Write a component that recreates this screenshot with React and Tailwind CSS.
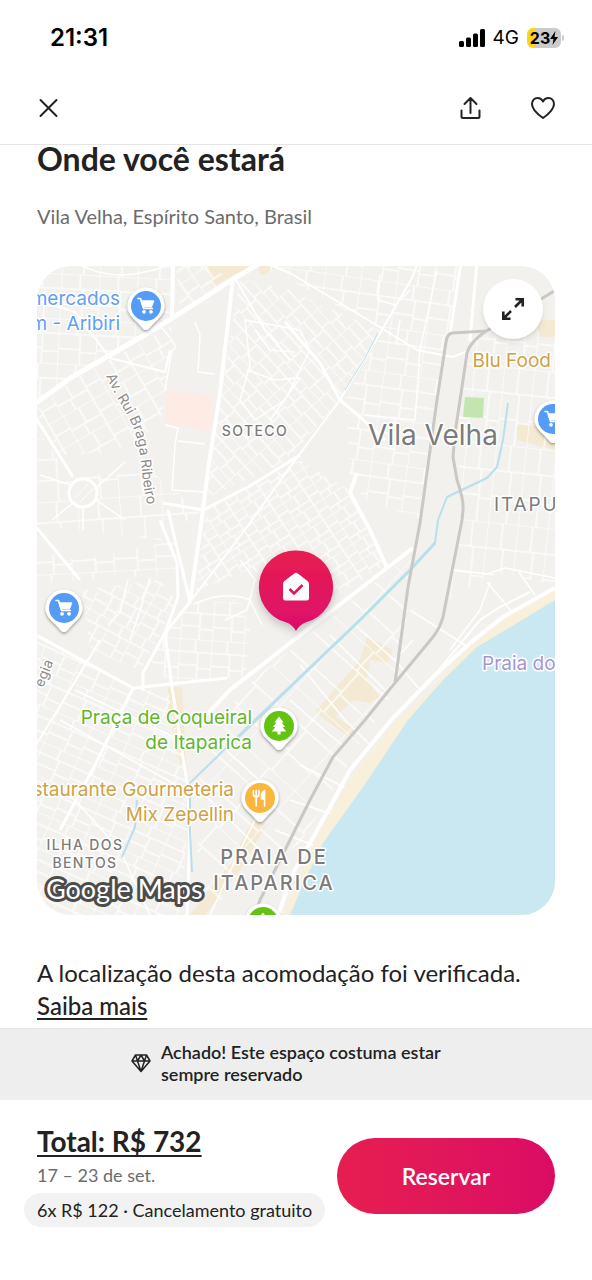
import React from "react";

const CART = (
  <g fill="none" stroke="#fff" strokeWidth="1.6" strokeLinecap="round" strokeLinejoin="round">
    <path d="M-8 -7.5h2.6l3 10h8.8" />
    <path d="M-4.8 -5h12.3l-2.2 5.6h-8.3z" fill="#fff" />
    <circle cx="-2" cy="5.8" r="1.1" fill="#fff" />
    <circle cx="5" cy="5.8" r="1.1" fill="#fff" />
  </g>
);

const TREE = (
  <path
    d="M0-9.5 4.6-3.6H2.6L6 1H3.6L7.2 5.4H1.6V8.6H-1.6V5.4H-7.2L-3.6 1H-6L-2.6-3.6H-4.6Z"
    fill="#fff"
  />
);

const FORK = (
  <g fill="none" stroke="#fff" strokeLinecap="round" strokeWidth="1.6">
    <path d="M-6.6-7.4v3.6q0 2.6 2.8 2.6t2.8-2.6v-3.6M-3.8-7.4V8" />
    <path d="M4.6 8V-7.2Q1.6-6 1.6-1.6V1h3" fill="#fff" />
  </g>
);

function Pin({ x, y, color, children }) {
  return (
    <g transform={`translate(${x} ${y})`}>
      <path
        d="M0-18.5A18.5 18.5 0 0 1 18.5 0C18.5 7 13.5 12 9 16L3 22.5Q0 25.5-3 22.5L-9 16C-13.5 12-18.5 7-18.5 0A18.5 18.5 0 0 1 0-18.5Z"
        fill="#fff"
        filter="url(#pinShadow)"
      />
      <circle r="15" fill={color} />
      {children}
    </g>
  );
}

const GRIDS = [
  { id: "g1", w: 19, h: 15, a: 3, pts: "36,266 172,266 172,318 72,376 36,400" },
  { id: "g2", w: 14, h: 17, a: 60, pts: "76,378 172,326 168,385 160,425 112,452 60,455 40,418 36,410" },
  { id: "g3", w: 12, h: 15, a: 55, pts: "176,266 208,266 232,280 180,310" },
  { id: "g4", w: 17, h: 10, a: 48, pts: "240,278 290,290 383,332 340,400 285,462 206,498 222,390" },
  { id: "g5", w: 18, h: 15, a: 8, pts: "262,266 462,266 446,340 430,450 422,520 366,500 350,480 345,400 383,330" },
  { id: "g6", w: 9, h: 12, a: 57, pts: "206,510 300,460 350,490 385,565 330,600 250,570 196,590" },
  { id: "g7", w: 15, h: 26, a: 6, pts: "466,340 555,330 555,586 500,572 448,600 462,500 455,440" },
  { id: "g8", w: 21, h: 12, a: -3, pts: "36,552 80,560 178,540 176,575 110,578 36,584" },
  { id: "g9", w: 16, h: 13, a: 4, pts: "150,660 168,628 188,604 240,600 250,630 246,676 170,684" },
  { id: "g10", w: 19, h: 11, a: 24, pts: "36,635 132,688 168,690 190,800 180,915 36,915" },
  { id: "g11", w: 34, h: 26, a: 42, pts: "414,552 400,680 300,843 200,915 195,790 240,690 388,572" },
  { id: "g12", w: 21, h: 21, a: -4, pts: "36,425 70,478 150,470 200,512 160,540 36,525" },
  { id: "g13", w: 13, h: 11, a: 28, pts: "82,590 160,580 176,600 160,635 140,670 90,650" },
];

const MAJOR = [
  ["M36 403 72 377 160 326 235 278 262 262", 5],
  ["M233 278 220 393 208 470 201 525 190 602", 4],
  ["M173 262 172 320", 4],
  ["M36 418 73 477M36 527 80 580", 3],
  ["M160 520 177 563 178 597 165 633 143 673V690", 3],
  ["M168 510 190 602 165 633 172 687 187 783 190 827 187 915", 3],
  ["M190 602 247 527 290 467 340 400 383 328 412 278 418 262", 2],
  ["M262 262 290 273 340 303 383 329 417 350 453 357 470 350", 2],
  ["M285 322 320 363 340 400 360 417 385 440", 3],
  ["M461 262 450 334M477 262 470 340", 3],
  ["M357 473 350 493 370 530 387 568", 4],
  ["M413 548 387 568 290 643 230 690 200 722", 4],
  ["M163 503 203 510 250 486 300 455", 3],
  ["M36 635 133 688 227 678", 3],
  ["M133 688 95 765 60 830", 3],
  ["M36 745 70 690 100 640", 2],
  ["M235 278 265 330 290 360", 2],
  ["M36 300 75 312 110 358 165 372 170 350", 2],
];

const MINOR = [
  "M75 262Q105 280 140 273T160 262",
  "M160 326Q182 350 172 350L165 390",
  "M245 320 300 330 310 350 285 400 255 420 240 400 250 365Z",
  "M255 330 270 350 295 352M247 370 275 380 300 378 270 420",
  "M195 322 200 335 198 372 215 374M165 425 178 428 175 445 172 490 205 492M178 441 205 444",
  "M128 580 120 612 108 625M150 578 140 610 130 640",
  "M380 275 378 300 395 305 410 290M400 320 396 345",
  "M437 270 420 350 415 420 365 415",
  "M454 570 487 574 505 568 555 578M487 582 512 612M490 582 480 610 450 650M519 572 535 595",
  "M240 560 255 580 247 610 225 620",
  "M194 604Q225 590 250 600L262 625",
  "M290 700 330 735 342 745M300 665 345 720 370 745",
  "M330 635 385 690M355 625 400 665M410 610 465 645",
  "M413 640 395 660 420 690M300 765 350 790M290 800 335 815M275 830 320 848",
  "M36 780 75 800 120 850 150 915M60 720 185 790M75 690 180 740",
  "M215 740 270 790 240 850 210 915M200 790 260 850",
  "M71 485 40 475M97 487 125 462M96 500 125 520M83 508V530M73 503 52 520",
];

function CityMap() {
  return (
    <svg
      viewBox="37 266 518 649"
      className="block w-full rounded-[34px]"
      role="img"
      aria-label="Mapa de Vila Velha"
    >
      <defs>
        {GRIDS.map((g) => (
          <pattern
            key={g.id}
            id={g.id}
            width={g.w * 2}
            height={g.h * 3}
            patternUnits="userSpaceOnUse"
            patternTransform={`rotate(${g.a})`}
          >
            <path
              d={`M0 0V${g.h * 3}M${g.w} 0V${g.h}M${g.w + 3} ${g.h}V${g.h * 3}M0 0H${g.w * 2}M0 ${g.h}H${g.w * 2}M0 ${g.h * 2}H${g.w + 3}M${g.w + 3} ${g.h * 2 + 3}H${g.w * 2}`}
              fill="none"
              stroke="#fdfdfc"
              strokeWidth="1.5"
            />
          </pattern>
        ))}
        <filter id="pinShadow" x="-40%" y="-30%" width="180%" height="180%">
          <feDropShadow dx="0" dy="1.5" stdDeviation="1.5" floodColor="#000" floodOpacity="0.4" />
        </filter>
        <filter id="homeShadow" x="-40%" y="-30%" width="180%" height="180%">
          <feDropShadow dx="0" dy="4" stdDeviation="5" floodColor="#000" floodOpacity="0.2" />
        </filter>
        <linearGradient id="homeFill" x1="0" y1="0" x2="0" y2="1">
          <stop offset="0" stopColor="#e81d50" />
          <stop offset="1" stopColor="#dc0f6c" />
        </linearGradient>
        <path id="avenue" d="M106 376C118 404 134 418 139 448S140 476 151 520" />
        <path id="egia" d="M43 688 60 645" />
      </defs>

      <rect x="36" y="266" width="520" height="649" fill="#f2f1ee" />

      <g fill="#f4ead3">
        <path d="M208 266H252L212 287ZM257 266H277L262 276Z" />
        <path d="M535 320H555V337H540ZM517 423 555 430V450L540 446 517 440Z" />
        <path d="M367 637 393 650 387 663 370 660 367 680 380 697 370 703 353 700 335 717 355 728 350 738 315 712 340 683 360 660Z" />
        <path d="M168 687H182L187 780 176 752 168 707Z" />
        <path d="M252 820 267 824 240 870 205 915H190L232 860Z" />
      </g>

      {GRIDS.map((g) => (
        <polygon key={g.id} points={g.pts} fill={`url(#${g.id})`} />
      ))}

      <path d="M167 390 213 397 210 432 165 423Z" fill="#fdebe4" />
      <path d="M465 397 484 398 483 418 463 417Z" fill="#c3e6b0" />

      <g fill="none" stroke="#fff" strokeLinejoin="round">
        {MINOR.map((d) => (
          <path key={d} d={d} strokeWidth="1.5" />
        ))}
        {MAJOR.map(([d, w]) => (
          <path key={d} d={d} strokeWidth={w} />
        ))}
        <circle cx="83" cy="493" r="14" strokeWidth="3" fill="#f2f1ee" />
        <path d="M75 498 88 484M80 502 93 489" strokeWidth="1" />
      </g>

      <g fill="none" stroke="#b9dfec" strokeWidth="3" strokeLinejoin="round">
        <path d="M378 333 365 358 345 390" strokeWidth="1" />
        <path d="M508 403 503 440 497 467 487 478 447 497 438 520 435 543 410 570 360 620 290 687 260 715 190 783" strokeWidth="2" />
        <path d="M435 543 410 570 360 620 290 687 230 745" />
        <path d="M190 783V833L192 872M137 800 135 827 122 857" strokeWidth="2" />
      </g>

      <path d="M555 590 503 620 463 653 430 690 397 720 347 783 317 837 297 880 283 915H555Z" fill="#f8f0da" />
      <path d="M555 600 517 623 477 647 443 680 408 720 363 787 323 843 305 880 290 915H555Z" fill="#c9e8f2" />
      <path
        d="M555 588 503 617 470 643 433 677 393 718 350 770 330 807 310 843 293 873 278 915"
        fill="none"
        stroke="#fff"
        strokeWidth="4"
      />
      <path d="M433 677 480 620 500 607 530 592" fill="none" stroke="#fff" strokeWidth="2" />

      <g fill="none" stroke="#c9c8c5" strokeWidth="3" strokeLinejoin="round">
        <path d="M556 290 510 318 486 331 452 333Q447 334 446 342L437 400 420 523 408 587 395 683" />
        <path d="M486 331Q470 342 467 353L462 387 455 433 453 457 457 480Q464 500 463 510L462 520 443 617Q440 628 433 637L394 684 365 720 333 757 310 800 290 840 260 900 255 915" />
      </g>

      <g
        fontFamily="Inter, 'Liberation Sans', sans-serif"
        stroke="#fff"
        strokeWidth="3"
        strokeLinejoin="round"
        paintOrder="stroke"
      >
        <g fontSize="19" fill="#62a0f2" textAnchor="end">
          <text x="120" y="305">mercados</text>
          <text x="120" y="330">m - Aribiri</text>
        </g>
        <g fontSize="19" fill="#62b62a" textAnchor="end">
          <text x="252" y="724">Praça de Coqueiral</text>
          <text x="252" y="749">de Itaparica</text>
        </g>
        <g fontSize="19" fill="#d0a144" textAnchor="end">
          <text x="234" y="796">staurante Gourmeteria</text>
          <text x="234" y="821">Mix Zepellin</text>
          <text x="551" y="367">Blu Food</text>
        </g>
        <text x="482" y="670" fontSize="19" fill="#a596d2">Praia do</text>
        <g fill="#7c7b79" textAnchor="middle">
          <text x="433" y="445" fontSize="28">Vila Velha</text>
          <text x="255" y="436" fontSize="14" fontWeight="500" className="tracking-widest">SOTECO</text>
          <text x="85" y="850" fontSize="14" fontWeight="500" className="tracking-widest">ILHA DOS</text>
          <text x="85" y="868" fontSize="14" fontWeight="500" className="tracking-widest">BENTOS</text>
          <text x="274" y="864" fontSize="20" fontWeight="500" className="tracking-widest">PRAIA DE</text>
          <text x="274" y="890" fontSize="20" fontWeight="500" className="tracking-widest">ITAPARICA</text>
        </g>
        <text x="494" y="511" fontSize="19" fill="#7c7b79" className="tracking-widest">ITAPUÃ</text>
        <g fontSize="14" fill="#8d8c8a">
          <text><textPath href="#avenue">Av. Rui Braga Ribeiro</textPath></text>
          <text><textPath href="#egia">egia</textPath></text>
        </g>
      </g>

      <Pin x={146} y={306} color="#549cf5">{CART}</Pin>
      <Pin x={64} y={608} color="#549cf5">{CART}</Pin>
      <Pin x={553} y={419} color="#549cf5">{CART}</Pin>
      <Pin x={279} y={726} color="#62c310">{TREE}</Pin>
      <Pin x={263} y={922} color="#62c310">{TREE}</Pin>
      <Pin x={260} y={798} color="#fbb63e">{FORK}</Pin>

      <path
        d="M296 550.5A36.5 36.5 0 0 1 307 622Q300 624 296 631Q292 624 285 622A36.5 36.5 0 0 1 296 550.5Z"
        fill="url(#homeFill)"
        filter="url(#homeShadow)"
      />
      <path
        d="M294.2 573.5Q296 572 297.8 573.5L307.5 581Q309 582.2 309 584V598Q309 600.5 306.5 600.5H285.5Q283 600.5 283 598V584Q283 582.2 284.5 581Z"
        fill="#fff"
      />
      <path d="M289.5 589 294 593.5 302.5 585" fill="none" stroke="#e0145f" strokeWidth="2.6" />

      <text
        x="46"
        y="899"
        fontSize="27"
        fontFamily="Lato, sans-serif"
        fill="#fff"
        stroke="#4c4c4c"
        strokeWidth="6"
        strokeLinejoin="round"
        paintOrder="stroke"
      >
        Google Maps
      </text>
    </svg>
  );
}

function StatusBar() {
  return (
    <div className="flex h-19 items-center justify-between pr-7 pl-[50px] font-[Inter,sans-serif] text-black">
      <span className="text-[24px] leading-7 font-semibold">21:31</span>
      <div className="flex items-center gap-2">
        <svg viewBox="0 0 26 18" className="h-[18px] w-[26px]" aria-hidden="true">
          <rect x="0" y="12" width="5" height="6" rx="1.5" />
          <rect x="7" y="8.5" width="5" height="9.5" rx="1.5" />
          <rect x="14" y="4.5" width="5" height="13.5" rx="1.5" />
          <rect x="21" y="0" width="5" height="18" rx="1.5" />
        </svg>
        <span className="text-[19px] leading-6">4G</span>
        <div className="flex items-center gap-px">
          <div className="flex h-5 w-[34px] items-center justify-center rounded-md bg-linear-to-r from-[#fbd31d] from-25% to-[#cbcbcb] to-25% text-[16px] leading-5 font-bold">
            23
            <svg viewBox="0 0 8 14" className="h-[14px] w-2" aria-hidden="true">
              <path d="M5.5 0 0 8H3.5L2.5 14 8 6H4.5Z" />
            </svg>
          </div>
          <div className="h-1.5 w-0.5 rounded-r-full bg-[#cbcbcb]" />
        </div>
      </div>
    </div>
  );
}

export default function App() {
  return (
    <div className="bg-white font-[Lato,sans-serif] text-[#222222]">
      <header className="border-b border-[#e6e6e6]">
        <StatusBar />
        <div className="flex h-[68px] items-start justify-between px-[37px] pt-5">
          <button type="button" aria-label="Fechar" className="size-6">
            <svg viewBox="0 0 24 24" className="size-6" fill="none" stroke="currentColor" strokeWidth="2" strokeLinecap="round">
              <path d="M3.5 4 19.5 20M19.5 4 3.5 20" />
            </svg>
          </button>
          <div className="flex gap-12">
            <button type="button" aria-label="Compartilhar" className="size-6">
              <svg viewBox="0 0 24 24" className="size-6" fill="none" stroke="currentColor" strokeWidth="2" strokeLinecap="round" strokeLinejoin="round">
                <path d="M11.5 17V2M5.5 8 11.5 2 17.5 8M2.5 14.5V20.5Q2.5 22 4 22H19Q20.5 22 20.5 20.5V14.5" />
              </svg>
            </button>
            <button type="button" aria-label="Salvar nos favoritos" className="size-6">
              <svg viewBox="0 0 24 24" className="size-6" fill="none" stroke="currentColor" strokeWidth="2" strokeLinejoin="round">
                <path d="M12 22C7 18.5 1 13.5 1 8C1 4.5 3.5 2 6.5 2C9 2 11 3.5 12 5.5C13 3.5 15 2 17.5 2C20.5 2 23 4.5 23 8C23 13.5 17 18.5 12 22Z" />
              </svg>
            </button>
          </div>
        </div>
      </header>

      <main className="px-[37px] pb-1.5">
        <h1 className="text-[32px] leading-7 font-bold">Onde você estará</h1>
        <p className="mt-[29px] text-[20px] leading-7 text-[#6c6c6c]">Vila Velha, Espírito Santo, Brasil</p>
        <div className="relative mt-9">
          <CityMap />
          <button
            type="button"
            aria-label="Expandir mapa"
            className="absolute top-[13px] right-3 flex size-[60px] items-center justify-center rounded-full bg-white shadow-md"
          >
            <svg viewBox="0 0 24 24" className="size-6" fill="none" stroke="currentColor" strokeWidth="2.6">
              <path d="M14 10 22 2M14.5 2.3H21.7V9.5M10 14 2 22M2.3 14.5V21.7H9.5" />
            </svg>
          </button>
        </div>
        <p className="mt-[41px] text-[24px] leading-[33px]">
          A localização desta acomodação foi verificada.{" "}
          <a href="#saiba-mais" className="block w-fit font-medium underline underline-offset-3">Saiba mais</a>
        </p>
      </main>

      <div className="flex items-center justify-center gap-2.5 border-t border-[#e4e4e4] bg-[#eeeeee] px-6 pt-3 pb-[15px]">
        <svg viewBox="0 0 20 20" className="size-5 shrink-0" fill="none" stroke="currentColor" strokeWidth="1.5" strokeLinejoin="round">
          <path d="M4.5 2H15.5L19 8 10 18.5 1 8ZM1 8H19M6.5 8 10 18.5 13.5 8M4.5 2 6.5 8 10 2 13.5 8 15.5 2" />
        </svg>
        <p className="w-[300px] text-[18px] leading-[22px] font-semibold">
          Achado! Este espaço costuma estar sempre reservado
        </p>
      </div>

      <footer className="flex items-center justify-between pt-[25px] pr-[37px] pb-[50px] pl-6">
        <div className="flex flex-col items-start whitespace-nowrap">
          <a href="#total" className="ml-[13px] text-[28px] leading-8 font-bold underline underline-offset-3">Total: R$ 732</a>
          <p className="mt-1 ml-[13px] text-[18px] leading-7 text-[#6c6c6c]">17 – 23 de set.</p>
          <p className="mt-1 rounded-full bg-[#f2f2f2] px-[13px] text-[18px] leading-[34px]">6x R$ 122 · Cancelamento gratuito</p>
        </div>
        <button
          type="button"
          className="h-[76px] w-[218px] shrink-0 rounded-full bg-linear-to-r from-[#e61e4f] to-[#db0b65] text-[23px] font-semibold text-white"
        >
          Reservar
        </button>
      </footer>
    </div>
  );
}
